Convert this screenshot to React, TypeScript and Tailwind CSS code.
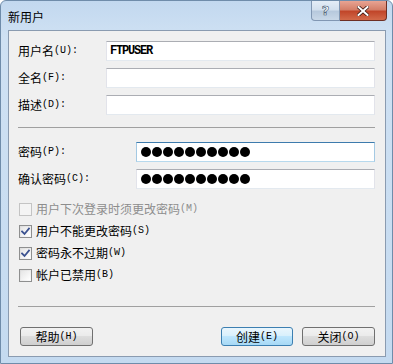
import React from "react";

const CJK = { fontFamily: '"Noto Sans CJK SC", "Noto Sans", sans-serif' };

function Mono({ children }: { children: React.ReactNode }) {
  return (
    <span className="text-[10px] leading-none" style={{ fontFamily: '"Liberation Mono", monospace' }}>
      {children}
    </span>
  );
}

function Label({ cn, key_, colon = true, className = "" }: { cn: string; key_: string; colon?: boolean; className?: string }) {
  return (
    <span className={`inline-flex items-center text-[12px] leading-none whitespace-nowrap ${className}`}>
      <span>{cn}</span>
      <Mono>{`(${key_})${colon ? ":" : ""}`}</Mono>
    </span>
  );
}

function Input({ children, focused = false }: { children?: React.ReactNode; focused?: boolean }) {
  return (
    <div
      className={`h-[20px] flex-1 bg-white border flex items-center pl-[3px] ${
        focused
          ? "border-t-[#3d7bad] border-x-[#a4c9e3] border-b-[#b7d9ed]"
          : "border-t-[#abadb3] border-x-[#e2e3ea] border-b-[#e3e9ef]"
      }`}
    >
      {children}
    </div>
  );
}

function Dots() {
  return (
    <div className="flex gap-[1px] pl-[1px]">
      {Array.from({ length: 10 }).map((_, i) => (
        <div key={i} className="w-[10px] h-[10px] rounded-full bg-black" />
      ))}
    </div>
  );
}

function CheckBox({ checked = false, disabled = false }: { checked?: boolean; disabled?: boolean }) {
  return (
    <div
      className={`w-[13px] h-[13px] shrink-0 border flex items-center justify-center ${
        disabled ? "border-[#c4c4c4] bg-[#f4f4f4]" : "border-[#8e8f8f] bg-gradient-to-br from-[#dcdcdc] to-[#fbfbfb]"
      }`}
    >
      <div className={`w-[9px] h-[9px] ${disabled ? "bg-[#f4f4f4]" : "bg-gradient-to-br from-[#e6e6e6] to-[#ffffff]"} flex items-center justify-center`}>
        {checked && (
          <svg width="9" height="9" viewBox="0 0 9 9">
            <path d="M1 4.5 L3.5 7 L8 1.5" fill="none" stroke="#3b5290" strokeWidth="1.8" strokeLinecap="square" />
          </svg>
        )}
      </div>
    </div>
  );
}

function CheckRow({ label, k, checked = false, disabled = false }: { label: string; k: string; checked?: boolean; disabled?: boolean }) {
  return (
    <div className="flex items-center h-[22px] gap-[4px] shrink-0">
      <CheckBox checked={checked} disabled={disabled} />
      <Label cn={label} key_={k} colon={false} className={disabled ? "text-[#8d8d8d]" : "text-black"} />
    </div>
  );
}

function Button({ children, def = false, w }: { children: React.ReactNode; def?: boolean; w: string }) {
  return (
    <div
      className={`${w} h-[19px] rounded-[3px] border flex items-center justify-center ${
        def
          ? "border-[#3c7fb1] bg-[linear-gradient(#eaf6fd_0%,#d9f0fc_45%,#bee6fd_50%,#a7d9f5_100%)]"
          : "border-[#707070] bg-[linear-gradient(#f2f2f2_0%,#ebebeb_45%,#dddddd_50%,#cfcfcf_100%)]"
      }`}
    >
      {children}
    </div>
  );
}

function Row({ w, label, k, children }: { w: string; label: string; k: string; children: React.ReactNode }) {
  return (
    <div className="flex items-center h-[20px] shrink-0">
      <div className={`${w} flex items-center`}><Label cn={label} key_={k} /></div>
      {children}
    </div>
  );
}

export default function App() {
  return (
    <div
      className="w-[393px] h-[364px] relative overflow-hidden rounded-t-[6px] border border-[#6f8caa] bg-[linear-gradient(180deg,#c2d8ef_0%,#cfe1f3_10%,#c4daf0_100%)] flex flex-col text-black leading-none"
      style={CJK}
    >
      {/* title bar */}
      <div className="h-[29px] shrink-0 flex items-start relative">
        <span className="text-[12px] leading-none mt-[10px] ml-[7px]">新用户</span>
        <div className="absolute right-[5px] top-0 flex h-[20px]">
          <div className="w-[29px] h-[20px] rounded-bl-[4px] border border-t-0 border-[#8197b3] bg-[linear-gradient(#e4edf7_0%,#d3e0ee_45%,#b7c9dd_55%,#c9d8e8_100%)] flex items-center justify-center">
            <span className="text-[13px] font-bold text-white leading-none" style={{ fontFamily: '"DejaVu Sans", sans-serif', WebkitTextStroke: "0.6px #3a4f6a" }}>?</span>
          </div>
          <div className="w-[47px] h-[20px] rounded-br-[4px] border border-t-0 border-l-0 border-[#6d2f24] bg-[linear-gradient(#e8a493_0%,#d47f69_45%,#c1462a_55%,#d26a4a_100%)] flex items-center justify-center">
            <svg width="12" height="10" viewBox="0 0 12 10">
              <path d="M1.5 1 L10.5 9 M10.5 1 L1.5 9" stroke="#3c1a14" strokeWidth="3.6" strokeLinecap="square" />
              <path d="M1.5 1 L10.5 9 M10.5 1 L1.5 9" stroke="#ffffff" strokeWidth="2" strokeLinecap="square" />
            </svg>
          </div>
        </div>
      </div>

      {/* client area */}
      <div className="ml-[7px] mr-[6px] h-[327px] shrink-0 bg-[#f0f0f0] border border-[#8a9bb0] flex flex-col px-[9px]">
        <div className="flex flex-col gap-[7px] mt-[10px] pr-[1px] shrink-0">
          <Row w="w-[88px]" label="用户名" k="U">
            <Input>
              <span className="text-[12px] leading-none font-bold" style={{ fontFamily: '"Liberation Mono", monospace', letterSpacing: "-1.2px" }}>FTPUSER</span>
            </Input>
          </Row>
          <Row w="w-[88px]" label="全名" k="F"><Input /></Row>
          <Row w="w-[88px]" label="描述" k="D"><Input /></Row>
        </div>

        <div className="mt-[12px] h-px shrink-0 bg-[#a0a0a0] mr-[1px]" />

        <div className="flex flex-col gap-[7px] mt-[14px] pr-[1px] shrink-0">
          <Row w="w-[118px]" label="密码" k="P"><Input focused><Dots /></Input></Row>
          <Row w="w-[118px]" label="确认密码" k="C"><Input><Dots /></Input></Row>
        </div>

        <div className="flex flex-col mt-[9px] ml-[1px] shrink-0">
          <CheckRow label="用户下次登录时须更改密码" k="M" disabled />
          <CheckRow label="用户不能更改密码" k="S" checked />
          <CheckRow label="密码永不过期" k="W" checked />
          <CheckRow label="帐户已禁用" k="B" />
        </div>

        <div className="mt-[20px] h-px shrink-0 bg-[#a0a0a0] mr-[1px]" />

        <div className="flex items-center mt-[20px] px-[2px] pr-[1px] shrink-0">
          <Button w="w-[73px]"><Label cn="帮助" key_="H" colon={false} /></Button>
          <div className="flex-1" />
          <Button w="w-[72px]" def><Label cn="创建" key_="E" colon={false} /></Button>
          <div className="w-[9px]" />
          <Button w="w-[73px]"><Label cn="关闭" key_="O" colon={false} /></Button>
        </div>
      </div>
    </div>
  );
}
